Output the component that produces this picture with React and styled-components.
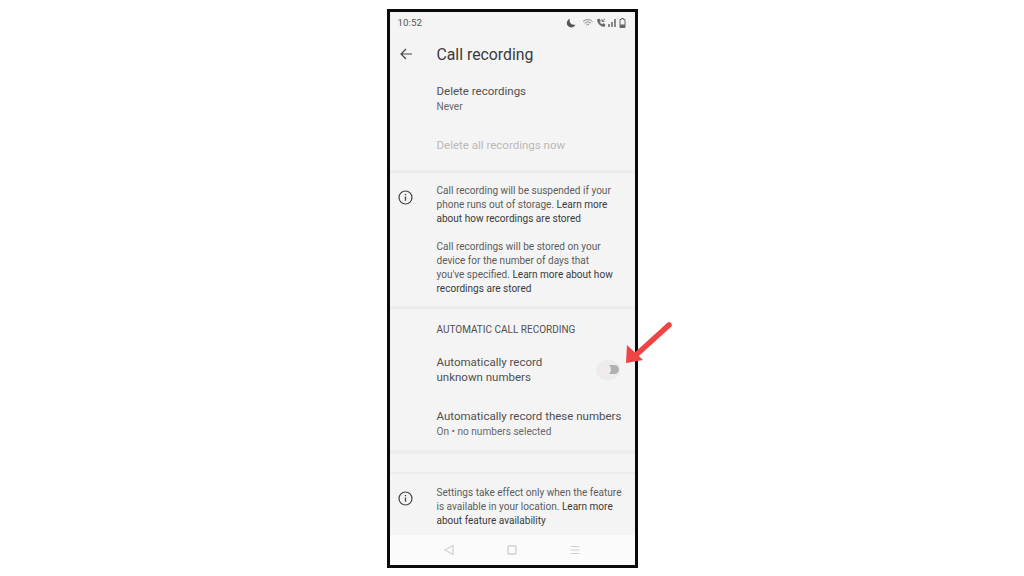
import { createGlobalStyle, styled } from "styled-components";

const GlobalStyle = createGlobalStyle`
  html, body { margin: 0; padding: 0; background: #fff; }
  body { font-family: Roboto, "Noto Sans", sans-serif; }
`;

const Page = styled.div`
  width: 1024px;
  height: 576px;
  padding-top: 9px;
  box-sizing: border-box;
  display: flex;
  justify-content: center;
  overflow: hidden;
  background: #fff;
`;

const Stage = styled.div`
  position: relative;
`;

const Phone = styled.div`
  width: 251px;
  height: 559px;
  box-sizing: border-box;
  border: 3px solid #0a0a0a;
  background: #f4f4f4;
  display: flex;
  flex-direction: column;
  overflow: hidden;
  color: #3c3c3c;
`;

const StatusBar = styled.div`
  height: 21px;
  padding: 0 9px 0 8px;
  display: flex;
  align-items: center;
  justify-content: space-between;
  font-size: 9.8px;
  color: #555;
`;

const StatusIcons = styled.div`
  display: flex;
  align-items: center;
  gap: 2px;
  color: #666;
`;

const Header = styled.div`
  height: 45px;
  box-sizing: border-box;
  padding: 0 0 3px 10px;
  display: flex;
  align-items: center;
  gap: 25px;
  h1 {
    margin: 0;
    font-size: 15.8px;
    font-weight: 400;
    color: #3a3a3a;
  }
`;

const SettingBlock = styled.div`
  padding-left: 47px;
  padding-top: ${(p) => p.$top || 0}px;
`;

const Title = styled.div`
  font-size: 11.5px;
  line-height: 15px;
  color: ${(p) => (p.$muted ? "#bdb8b8" : "#505050")};
`;

const Sub = styled.div`
  font-size: 10.1px;
  line-height: 14px;
  margin-top: 1px;
  color: #6a6a6a;
`;

const Divider = styled.div`
  height: ${(p) => p.$size || 4}px;
  background: #ececec;
  flex: none;
`;

const InfoRow = styled.div`
  display: flex;
  padding: ${(p) => p.$pad || "6px 0 0 7px"};
  gap: 23px;
`;

const InfoIcon = styled.svg`
  width: 17px;
  height: 17px;
  flex: none;
  margin-top: ${(p) => p.$top || 2}px;
`;

const InfoText = styled.div`
  width: 190px;
`;

const Para = styled.p`
  margin: 0 0 ${(p) => p.$after || 0}px;
  font-size: 10.05px;
  line-height: 14px;
  color: #5c5c5c;
  white-space: nowrap;
  b {
    font-weight: 400;
    color: #3a3a3a;
  }
`;

const Caption = styled.div`
  padding: 14px 0 0 47px;
  font-size: 10px;
  line-height: 14px;
  color: #505050;
`;

const SwitchRow = styled.div`
  display: flex;
  align-items: center;
  justify-content: space-between;
  padding: 18px 15px 0 47px;
`;

const Switch = styled.div`
  position: relative;
  width: 24px;
  height: 20px;
  margin-top: -1px;
  border-radius: 10px;
  background: #ececec;
  &::before {
    content: "";
    position: absolute;
    right: 1px;
    top: 5px;
    width: 14px;
    height: 9px;
    border-radius: 5px;
    background: #b0b0b0;
  }
  &::after {
    content: "";
    position: absolute;
    left: 2px;
    top: 3px;
    width: 13px;
    height: 13px;
    border-radius: 50%;
    background: #efebeb;
  }
`;

const Spacer = styled.div`
  height: ${(p) => p.$size}px;
  flex: none;
`;

const NavBar = styled.div`
  margin-top: auto;
  height: 30px;
  flex: none;
  background: #fbfbfb;
  display: flex;
  align-items: center;
  justify-content: center;
  gap: 51px;
`;

const Arrow = styled.svg`
  position: absolute;
  left: 235px;
  top: 310px;
  width: 54px;
  height: 58px;
`;

function CircleInfo({ top }) {
  return (
    <InfoIcon $top={top} viewBox="0 0 17 17" fill="none" stroke="#444">
      <circle cx="8.500" cy="8.500" r="6.500" strokeWidth="1.200" />
      <path d="M8.500 7.500v4.200M8.500 5v1.300" strokeWidth="1.300" />
    </InfoIcon>
  );
}

export default function App() {
  return (
    <Page>
      <GlobalStyle />
      <Stage>
        <Phone>
          <StatusBar>
            <span>10:52</span>
            <StatusIcons>
              <svg width="10" height="10" viewBox="0 0 10 10" style={{ marginRight: 4 }}>
                <path d="M4 .8a4.400 4.400 0 1 0 5.400 5.600A4.200 4.200 0 0 1 4 .8z" fill="#555" />
              </svg>
              <svg width="12" height="10" viewBox="0 0 12 10" fill="none" stroke="#8a8a8a">
                <path d="M1 3.500a7 7 0 0 1 9.500 0M2.600 5.200a4.600 4.600 0 0 1 6.300 0M4.300 7a2 2 0 0 1 2.900 0" strokeWidth="1" />
              </svg>
              <svg width="10" height="10" viewBox="0 0 10 10" fill="none" stroke="#555">
                <path d="M1.500 1.500c0 4 3 7 7 7l.5-2-2-1-1 1c-1-.5-2-1.500-2.500-2.500l1-1-1-2z" fill="#666" strokeWidth=".5" />
                <path d="M6 1v2.500h2.500M6.300 3.200L9 .8" strokeWidth=".8" />
              </svg>
              <svg width="9" height="9" viewBox="0 0 9 9">
                <path d="M0 6h2v3H0zM3 4h2v5H3zM6 1h2v8H6z" fill="#888" />
              </svg>
              <svg width="7" height="10" viewBox="0 0 7 10" fill="none">
                <path d="M2.500.5h2V1.500H6V9.500H1V1.500h1.500z" stroke="#666" />
                <path d="M1 6.500h5v3H1z" fill="#666" />
              </svg>
            </StatusIcons>
          </StatusBar>

          <Header>
            <svg width="12" height="12" viewBox="0 0 12 12" fill="none" stroke="#444" strokeWidth="1.200">
              <path d="M12 6H1M6 1L1 6l5 5" />
            </svg>
            <h1>Call recording</h1>
          </Header>

          <SettingBlock $top={6}>
            <Title>Delete recordings</Title>
            <Sub>Never</Sub>
          </SettingBlock>
          <SettingBlock $top={24}>
            <Title $muted>Delete all recordings now</Title>
          </SettingBlock>

          <Spacer $size={17} />
          <Divider $size={3} />

          <InfoRow $pad="11px 0 0 7px">
            <CircleInfo top={5} />
            <InfoText>
              <Para $after={14}>
                Call recording will be suspended if your
                <br />
                phone runs out of storage. <b>Learn more</b>
                <br />
                <b>about how recordings are stored</b>
              </Para>
              <Para>
                Call recordings will be stored on your
                <br />
                device for the number of days that
                <br />
                you've specified. <b>Learn more about how</b>
                <br />
                <b>recordings are stored</b>
              </Para>
            </InfoText>
          </InfoRow>

          <Spacer $size={10} />
          <Divider $size={3} />

          <Caption>AUTOMATIC CALL RECORDING</Caption>
          <SwitchRow>
            <Title>
              Automatically record
              <br />
              unknown numbers
            </Title>
            <Switch />
          </SwitchRow>
          <SettingBlock $top={24}>
            <Title>Automatically record these numbers</Title>
            <Sub>On • no numbers selected</Sub>
          </SettingBlock>

          <Spacer $size={11} />
          <Divider $size={4} />
          <Spacer $size={18} />
          <Divider $size={2} />

          <InfoRow $pad="12px 0 0 7px">
            <CircleInfo top={4} />
            <InfoText>
              <Para>
                Settings take effect only when the feature
                <br />
                is available in your location. <b>Learn more</b>
                <br />
                <b>about feature availability</b>
              </Para>
            </InfoText>
          </InfoRow>

          <NavBar>
            <svg width="12" height="12" viewBox="0 0 12 12" fill="none" stroke="#d6d0d0" strokeWidth="1.200">
              <path d="M10 1.500v9L2 6z" />
            </svg>
            <svg width="12" height="12" viewBox="0 0 12 12" fill="none" stroke="#d2d0d0" strokeWidth="1.400">
              <rect x="2" y="2" width="8" height="8" rx="1" />
            </svg>
            <svg width="12" height="12" viewBox="0 0 12 12" fill="none" stroke="#d2d0d0" strokeWidth="1.200">
              <path d="M1.500 2.500h9M1.500 6h9M1.500 9.500h9" />
            </svg>
          </NavBar>
        </Phone>
        <Arrow viewBox="0 0 54 58">
          <path d="M47 6L14 36" stroke="#ee4444" strokeWidth="5.500" strokeLinecap="round" fill="none" />
          <path d="M4 44L5 26L21 41z" fill="#ee4444" />
        </Arrow>
      </Stage>
    </Page>
  );
}
